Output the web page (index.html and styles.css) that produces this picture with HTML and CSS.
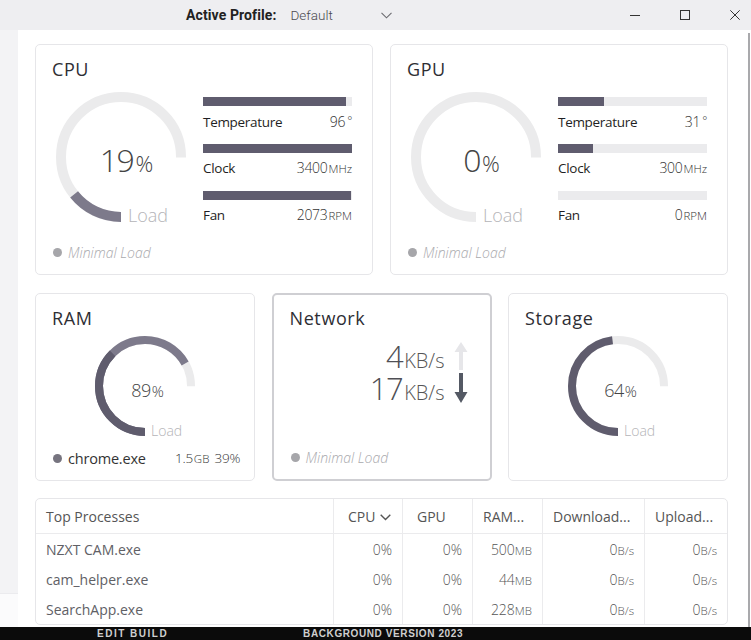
FILE: index.html
```html
<!DOCTYPE html>
<html lang="en">
<head>
<meta charset="utf-8">
<title>System Monitoring</title>
<link rel="stylesheet" href="styles.css">
</head>
<body>
<div class="app">
  <header class="titlebar">
    <div class="profile">
      <span class="profile-label">Active Profile:</span>
      <div class="profile-select">
        <span class="profile-value">Default</span>
        <svg class="chev" width="11" height="7" viewBox="0 0 11 7"><path d="M0.5 0.8 L5.5 5.8 L10.5 0.8" fill="none" stroke="#6b6b70" stroke-width="1.1"/></svg>
      </div>
    </div>
    <div class="win-controls">
      <svg width="10" height="10" viewBox="0 0 10 10"><path d="M0 5.5 H10" stroke="#333" stroke-width="1"/></svg>
      <svg width="10" height="10" viewBox="0 0 10 10"><rect x="0.5" y="0.5" width="9" height="9" fill="none" stroke="#333" stroke-width="1"/></svg>
      <svg width="10" height="10" viewBox="0 0 10 10"><path d="M0.3 0.3 L9.7 9.7 M9.7 0.3 L0.3 9.7" stroke="#333" stroke-width="1"/></svg>
    </div>
  </header>

  <div class="main">
    <aside class="rail"><div class="rail-top"></div></aside>

    <main class="content">
      <section class="row row-top">
        <!-- CPU -->
        <article class="card">
          <h2 class="card-title">CPU</h2>
          <div class="hw-body">
            <div class="gauge gauge-lg">
              <svg width="130" height="130" viewBox="0 0 130 130">
                <circle class="g-track" cx="65" cy="65" r="60" stroke-width="10" stroke-dasharray="282.74 400" transform="rotate(90 65 65)"/>
                <circle class="g-fill-light" cx="65" cy="65" r="60" stroke-width="10" stroke-dasharray="53.72 400" transform="rotate(90 65 65)"/>
              </svg>
              <div class="g-value"><span class="g-num">19</span><span class="g-pct">%</span></div>
              <div class="g-caption">Load</div>
            </div>
            <div class="stats">
              <div class="stat">
                <div class="bar"><div class="bar-fill" style="width:96%"></div></div>
                <div class="stat-row"><span class="stat-label">Temperature</span><span class="stat-val">96<span class="deg">°</span></span></div>
              </div>
              <div class="stat">
                <div class="bar"><div class="bar-fill" style="width:100%"></div></div>
                <div class="stat-row"><span class="stat-label">Clock</span><span class="stat-val">3400<span class="unit">MHz</span></span></div>
              </div>
              <div class="stat">
                <div class="bar"><div class="bar-fill" style="width:99%"></div></div>
                <div class="stat-row"><span class="stat-label">Fan</span><span class="stat-val">2073<span class="unit">RPM</span></span></div>
              </div>
            </div>
          </div>
          <div class="card-foot"><span class="dot"></span><span class="foot-note">Minimal Load</span></div>
        </article>

        <!-- GPU -->
        <article class="card">
          <h2 class="card-title">GPU</h2>
          <div class="hw-body">
            <div class="gauge gauge-lg">
              <svg width="130" height="130" viewBox="0 0 130 130">
                <circle class="g-track" cx="65" cy="65" r="60" stroke-width="10" stroke-dasharray="282.74 400" transform="rotate(90 65 65)"/>
              </svg>
              <div class="g-value"><span class="g-num">0</span><span class="g-pct">%</span></div>
              <div class="g-caption">Load</div>
            </div>
            <div class="stats">
              <div class="stat">
                <div class="bar"><div class="bar-fill" style="width:31%"></div></div>
                <div class="stat-row"><span class="stat-label">Temperature</span><span class="stat-val">31<span class="deg">°</span></span></div>
              </div>
              <div class="stat">
                <div class="bar"><div class="bar-fill" style="width:23.5%"></div></div>
                <div class="stat-row"><span class="stat-label">Clock</span><span class="stat-val">300<span class="unit">MHz</span></span></div>
              </div>
              <div class="stat">
                <div class="bar"><div class="bar-fill" style="width:0%"></div></div>
                <div class="stat-row"><span class="stat-label">Fan</span><span class="stat-val">0<span class="unit">RPM</span></span></div>
              </div>
            </div>
          </div>
          <div class="card-foot"><span class="dot"></span><span class="foot-note">Minimal Load</span></div>
        </article>
      </section>

      <section class="row row-mid">
        <!-- RAM -->
        <article class="card">
          <h2 class="card-title">RAM</h2>
          <div class="gauge gauge-sm">
            <svg width="100" height="100" viewBox="0 0 100 100">
              <circle class="g-track" cx="50" cy="50" r="46" stroke-width="8" stroke-dasharray="216.77 400" transform="rotate(90 50 50)"/>
              <circle class="g-fill-light" cx="50" cy="50" r="46" stroke-width="8" stroke-dasharray="192.93 400" transform="rotate(90 50 50)"/>
              <circle class="g-fill" cx="50" cy="50" r="46" stroke-width="8" stroke-dasharray="108.4 400" transform="rotate(90 50 50)"/>
            </svg>
            <div class="g-value"><span class="g-num">89</span><span class="g-pct">%</span></div>
            <div class="g-caption">Load</div>
          </div>
          <div class="card-foot">
            <span class="dot dot-dark"></span><span class="proc-name">chrome.exe</span>
            <span class="proc-use">1.5<span class="unit">GB</span> <span class="proc-pct">39%</span></span>
          </div>
        </article>

        <!-- Network -->
        <article class="card card-active">
          <h2 class="card-title">Network</h2>
          <div class="net-rates">
            <span class="rate"><span class="rate-num">4</span><span class="rate-unit">KB/s</span></span>
            <svg class="arrow" width="14" height="28" viewBox="0 0 14 28"><path d="M5 28 V10 H0.5 L7 0 L13.5 10 H9 V28 Z" fill="#e6e6e9"/></svg>
            <span class="rate"><span class="rate-num">17</span><span class="rate-unit">KB/s</span></span>
            <svg class="arrow" width="14" height="30" viewBox="0 0 14 30"><path d="M5 0 V19 H0.5 L7 30 L13.5 19 H9 V0 Z" fill="#545964"/></svg>
          </div>
          <div class="card-foot"><span class="dot"></span><span class="foot-note">Minimal Load</span></div>
        </article>

        <!-- Storage -->
        <article class="card">
          <h2 class="card-title">Storage</h2>
          <div class="gauge gauge-sm">
            <svg width="100" height="100" viewBox="0 0 100 100">
              <circle class="g-track" cx="50" cy="50" r="46" stroke-width="8" stroke-dasharray="216.77 400" transform="rotate(90 50 50)"/>
              <circle class="g-fill" cx="50" cy="50" r="46" stroke-width="8" stroke-dasharray="138.73 400" transform="rotate(90 50 50)"/>
            </svg>
            <div class="g-value"><span class="g-num">64</span><span class="g-pct">%</span></div>
            <div class="g-caption">Load</div>
          </div>
        </article>
      </section>

      <table class="procs">
        <colgroup>
          <col class="c-name"><col class="c-cpu"><col class="c-gpu"><col class="c-ram"><col class="c-down"><col class="c-up">
        </colgroup>
        <thead>
          <tr>
            <th class="th-name">Top Processes</th>
            <th class="th-sort">CPU <svg class="sort-chev" width="11" height="7" viewBox="0 0 11 7"><path d="M0.7 0.8 L5.5 5.6 L10.3 0.8" fill="none" stroke="#555" stroke-width="1.4"/></svg></th>
            <th class="th-pad">GPU</th>
            <th>RAM...</th>
            <th>Download...</th>
            <th>Upload...</th>
          </tr>
        </thead>
        <tbody>
          <tr>
            <td class="td-name">NZXT CAM.exe</td><td>0%</td><td>0%</td><td>500<span class="unit">MB</span></td><td>0<span class="unit">B/s</span></td><td>0<span class="unit">B/s</span></td>
          </tr>
          <tr>
            <td class="td-name">cam_helper.exe</td><td>0%</td><td>0%</td><td>44<span class="unit">MB</span></td><td>0<span class="unit">B/s</span></td><td>0<span class="unit">B/s</span></td>
          </tr>
          <tr>
            <td class="td-name">SearchApp.exe</td><td>0%</td><td>0%</td><td>228<span class="unit">MB</span></td><td>0<span class="unit">B/s</span></td><td>0<span class="unit">B/s</span></td>
          </tr>
        </tbody>
      </table>
    </main>

    <div class="scrollbar"><div class="scroll-thumb"></div></div>
  </div>

  <footer class="taskbar">
    <span class="tb-text tb-a">EDIT BUILD</span>
    <span class="tb-text tb-b">BACKGROUND VERSION 2023</span>
  </footer>
</div>
</body>
</html>
```

FILE: styles.css
```css
* { box-sizing: border-box; }

html, body {
  margin: 0;
  padding: 0;
  width: 751px;
  height: 640px;
  overflow: hidden;
  background: #ffffff;
  font-family: "Open Sans", "Noto Sans", sans-serif;
  color: #333;
}

.app {
  display: flex;
  flex-direction: column;
  width: 751px;
  height: 640px;
}

/* ---------- title bar ---------- */
.titlebar {
  height: 30px;
  flex: none;
  background: #eeeef1;
  display: flex;
  align-items: center;
}

.profile {
  display: flex;
  align-items: center;
  margin-left: 186px;
}

.profile-label {
  font-family: "Roboto", "Open Sans", sans-serif;
  font-weight: 700;
  font-size: 14px;
  color: #222;
  letter-spacing: 0.1px;
}

.profile-select {
  display: flex;
  align-items: center;
  width: 102px;
  margin-left: 14px;
  justify-content: space-between;
}

.profile-value {
  font-family: "Roboto", "Open Sans", sans-serif;
  font-size: 13.5px;
  font-weight: 300;
  color: #4a4a4f;
}

.chev { margin-top: 1px; }

.win-controls {
  margin-left: auto;
  margin-right: 11px;
  display: flex;
  align-items: center;
  gap: 40px;
}

.win-controls svg { display: block; }

/* ---------- main area ---------- */
.main {
  flex: 1;
  display: flex;
  min-height: 0;
}

.rail {
  width: 18px;
  flex: none;
  display: flex;
  flex-direction: column;
  background: #fbfbfc;
}

.rail-top {
  height: 564px;
  background: #f3f3f5;
  border-bottom: 1px solid #ebebee;
}

.content {
  flex: 1;
  padding: 14px 0 0 17px;
}

.scrollbar {
  width: 6px;
  flex: none;
  padding-top: 3px;
}

.scroll-thumb {
  width: 2px;
  height: 100%;
  margin-left: 3px;
  background: #a9a9ac;
}

/* ---------- cards ---------- */
.row {
  display: grid;
  width: 693px;
}

.row-top {
  grid-template-columns: 338px 338px;
  column-gap: 17px;
  height: 231px;
}

.row-mid {
  grid-template-columns: 220px 220px 220px;
  column-gap: 16.5px;
  height: 188px;
  margin-top: 18px;
}

.card {
  position: relative;
  display: flex;
  flex-direction: column;
  background: #fff;
  border: 1px solid #e6e6e9;
  border-radius: 5px;
  padding: 11px 16px 12px 16px;
}

.card-active {
  border: 2px solid #cfcfd3;
  padding: 10px 15px 12px 16px;
}

.card-title {
  margin: 0;
  font-size: 18px;
  line-height: 26px;
  font-weight: 500;
  letter-spacing: 0.6px;
  color: #2e2e34;
}

.hw-body {
  display: flex;
  margin-top: 10px;
}

/* gauges */
.gauge {
  position: relative;
  flex: none;
}

.gauge svg { display: block; }

.g-track { fill: none; stroke: #ebebec; }
.g-fill { fill: none; stroke: #5f5c6d; }
.g-fill-light { fill: none; stroke: #7d7a8b; }

.g-value {
  position: absolute;
  left: 0;
  right: 0;
  text-align: center;
  font-weight: 300;
  color: #444;
  white-space: nowrap;
}

.g-caption {
  position: absolute;
  font-weight: 300;
  color: #b4b4b7;
  white-space: nowrap;
}

.gauge-lg {
  width: 130px;
  height: 130px;
  margin-left: 4px;
}

.gauge-lg .g-value {
  top: 48px;
  padding-left: 11px;
  line-height: 40px;
}

.gauge-lg .g-num { font-size: 32px; letter-spacing: -1.5px; }
.gauge-lg .g-pct { font-size: 22px; margin-left: 2px; }

.gauge-lg .g-caption {
  left: 72px;
  top: 111px;
  font-size: 18px;
  line-height: 24px;
}

.gauge-sm {
  width: 100px;
  height: 100px;
  margin: 5px auto 0;
}

.gauge-sm .g-value {
  top: 42px;
  padding-left: 5px;
  line-height: 24px;
}

.gauge-sm .g-num { font-size: 18px; letter-spacing: -0.5px; }
.gauge-sm .g-pct { font-size: 15px; margin-left: 1px; }

.gauge-sm .g-caption {
  left: 56px;
  top: 86px;
  font-size: 14px;
  line-height: 18px;
}

/* stat bars */
.stats {
  width: 149px;
  margin-left: 17px;
  margin-top: 5px;
}

.stat { margin-bottom: 12px; }

.bar {
  height: 9px;
  background: #ebebed;
}

.bar-fill {
  height: 100%;
  background: #5f5c6e;
}

.stat-row {
  display: flex;
  justify-content: space-between;
  align-items: baseline;
  margin-top: 5px;
  line-height: 20px;
  white-space: nowrap;
}

.stat-label {
  font-size: 13.5px;
  letter-spacing: -0.3px;
  color: #1f1f24;
}

.stat-val {
  font-size: 14px;
  font-weight: 300;
  color: #333;
  letter-spacing: -0.3px;
}

.unit {
  font-size: 11.5px;
  margin-left: 1px;
  letter-spacing: 0;
}

.deg {
  font-size: 12px;
  margin-left: 2px;
  vertical-align: 2px;
}

/* card footer */
.card-foot {
  margin-top: auto;
  display: flex;
  align-items: center;
  height: 20px;
  white-space: nowrap;
}

.dot {
  width: 9px;
  height: 9px;
  border-radius: 50%;
  background: #a6a6aa;
  flex: none;
  margin-left: 1px;
}

.dot-dark { background: #76747f; }

.foot-note {
  margin-left: 6px;
  font-size: 14px;
  font-style: italic;
  font-weight: 300;
  color: #a9a9ad;
}

.proc-name {
  margin-left: 6px;
  font-size: 14.5px;
  color: #333;
  letter-spacing: -0.2px;
}

.proc-use {
  margin-left: auto;
  margin-right: -2px;
  font-size: 13.5px;
  font-weight: 300;
  color: #333;
  letter-spacing: -0.3px;
}

.proc-pct { margin-left: 2px; }

/* network */
.net-rates {
  display: grid;
  grid-template-columns: auto 14px;
  grid-auto-rows: 32px;
  justify-content: end;
  align-items: center;
  column-gap: 9px;
  margin-top: 9px;
  margin-right: 7px;
}

.rate {
  display: flex;
  align-items: baseline;
  justify-content: flex-end;
  height: 32px;
  font-weight: 300;
  color: #555;
  white-space: nowrap;
}

.rate-num,
.rate-unit {
  display: inline-block;
  height: 32px;
  line-height: 32px;
  overflow: visible;
}

.rate-num { font-size: 31px; letter-spacing: -1.5px; color: #4f4f55; }
.rate-unit { font-size: 20px; margin-left: 2px; }

.arrow { display: block; }

/* ---------- process table ---------- */
.procs {
  width: 693px;
  margin-top: 17px;
  border: 1px solid #e6e6e9;
  border-radius: 5px;
  border-spacing: 0;
  border-collapse: separate;
  table-layout: fixed;
  font-size: 14px;
  color: #5a5a5f;
}

.c-name { width: 297px; }
.c-cpu { width: 69px; }
.c-gpu { width: 70px; }
.c-ram { width: 70px; }
.c-down { width: 102px; }
.c-up { width: 83px; }

.procs th {
  height: 35px;
  padding: 0 4px 0 10px;
  text-align: left;
  font-weight: 400;
  color: #555;
  border-bottom: 1px solid #ebebed;
  border-left: 1px solid #ebebed;
  white-space: nowrap;
  overflow: hidden;
}

.procs th.th-name { border-left: none; padding-left: 10px; }
.procs th.th-sort { padding-left: 14px; }
.procs th.th-pad { padding-left: 14px; }

.sort-chev { vertical-align: 1px; margin-left: 1px; }

.procs td {
  height: 30px;
  padding: 0 10px 0 4px;
  text-align: right;
  font-weight: 300;
  color: #555;
  border-left: 1px solid #ebebed;
  white-space: nowrap;
}

.procs td.td-name {
  border-left: none;
  text-align: left;
  padding-left: 10px;
  font-weight: 400;
  color: #606065;
}

.procs .unit { font-size: 11.5px; margin-left: 0; }

/* ---------- desktop strip under the window ---------- */
.taskbar {
  height: 13px;
  flex: none;
  background: #0b0b0b;
  display: flex;
  align-items: center;
}

.tb-text {
  font-family: "Liberation Sans", sans-serif;
  font-weight: 700;
  font-size: 10px;
  line-height: 12px;
  color: #cfcfcf;
  letter-spacing: 1.5px;
  white-space: nowrap;
}

.tb-a { margin-left: 97px; }
.tb-b { margin-left: 135px; letter-spacing: 0.6px; }
```
